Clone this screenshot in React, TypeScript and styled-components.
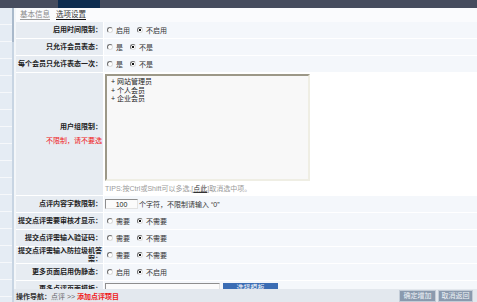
import React from "react";
import styled, { createGlobalStyle } from "styled-components";

const GlobalStyle = createGlobalStyle`
  html, body {
    margin: 0;
    padding: 0;
    width: 477px;
    height: 302px;
    overflow: hidden;
    background: #ffffff;
  }
  body {
    font-family: "Liberation Sans", "Noto Sans CJK SC", sans-serif;
    font-size: 7px;
    color: #333;
  }
`;

const Page = styled.div`
  position: relative;
  width: 477px;
  height: 302px;
  display: flex;
  flex-direction: column;
  overflow: hidden;
`;

// barre du haut (menu sombre)
const TopBar = styled.div`
  height: 8px;
  flex-shrink: 0;
  display: flex;
  background: #464c5e;
`;

const TopGap = styled.div<{ $w: number }>`
  width: ${(p) => p.$w}px;
`;

const TopActive = styled.div`
  width: 42px;
  background: #0d2c50;
`;

const Body = styled.div`
  flex: 1;
  display: flex;
  min-height: 0;
`;

const Sidebar = styled.div`
  width: 12px;
  flex-shrink: 0;
  background: repeating-linear-gradient(to bottom, #e5ecf4 0 16px, #f6f8fb 16px 17px);
`;

const Divider = styled.div`
  width: 2px;
  flex-shrink: 0;
  background: linear-gradient(to bottom, #a9b9cb 0 34px, #c8d5e3 34px);
`;

const Gutter = styled.div`
  width: 2px;
  flex-shrink: 0;
  background: #f3f6f9;
`;

const Main = styled.div`
  flex: 1;
  display: flex;
  flex-direction: column;
  min-width: 0;
  overflow: hidden;
`;

const Tabs = styled.div`
  height: 14px;
  flex-shrink: 0;
  display: flex;
  align-items: flex-start;
  gap: 6px;
  padding-left: 4px;
  background: #fafbfd;
`;

const Tab = styled.span<{ $active?: boolean }>`
  font-size: 7.5px;
  line-height: 9px;
  margin-top: 2px;
  color: ${(p) => (p.$active ? "#333" : "#8a8a8a")};
  border-bottom: ${(p) => (p.$active ? "1.5px solid #111" : "1px solid #9a9a9a")};
`;

const Form = styled.div`
  display: flex;
  flex-direction: column;
`;

const Row = styled.div<{ $h?: number }>`
  display: grid;
  grid-template-columns: 88px 1fr;
  height: ${(p) => p.$h ?? 17}px;
  border-bottom: 1px solid #ffffff;
  box-sizing: border-box;
`;

const Label = styled.div`
  background: #e7ecf2;
  border-right: 1px solid #ffffff;
  display: flex;
  flex-direction: column;
  align-items: flex-end;
  justify-content: center;
  padding-right: 1px;
  font-weight: 700;
  color: #222;
  text-align: right;
  line-height: 8px;
`;

const Hint = styled.div`
  color: #f01818;
  font-weight: 400;
  margin-top: 6px;
`;

const Value = styled.div<{ $plain?: boolean }>`
  background: ${(p) => (p.$plain ? "#ffffff" : "#f4f7fb")};
  display: flex;
  align-items: center;
  padding-left: 3px;
  min-width: 0;
`;

const ValueStack = styled.div`
  background: #ffffff;
  display: flex;
  flex-direction: column;
  padding: 0 0 0 1px;
`;

const Option = styled.label`
  display: inline-flex;
  align-items: center;
  margin-right: 7px;
  color: #333;
`;

const Radio = styled.span<{ $on?: boolean }>`
  display: inline-block;
  box-sizing: border-box;
  width: 6px;
  height: 6px;
  border-radius: 50%;
  border: 1px solid;
  border-color: #6f6f6f #dcdcdc #dcdcdc #6f6f6f;
  background: ${(p) =>
    p.$on ? "radial-gradient(circle, #111 0 1.1px, #ffffff 1.4px)" : "#ffffff"};
  margin-right: 3px;
`;

const ListBox = styled.div`
  width: 205px;
  height: 107px;
  box-sizing: border-box;
  margin-top: 1px;
  border: 2px solid;
  border-color: #9c9888 #efeee4 #efeee4 #9c9888;
  background: #f8f8f8;
  padding: 2px 0 0 4px;
  line-height: 8.5px;
  color: #222;
`;

const Tips = styled.div`
  margin-top: 4px;
  color: #9a9a9a;
  line-height: 8px;
  b {
    color: #333;
    font-weight: 400;
    text-decoration: underline;
  }
`;

const NumInput = styled.input`
  width: 33px;
  height: 10px;
  box-sizing: border-box;
  border: 1px solid;
  border-color: #8e8e8e #e2e2e2 #e2e2e2 #8e8e8e;
  background: #fbfbfb;
  font: inherit;
  font-size: 7px;
  text-align: center;
  padding: 0;
  margin: 0 1px 0 -2px;
  color: #222;
`;

const TextInput = styled.div`
  width: 115px;
  height: 10px;
  box-sizing: border-box;
  border: 1px solid;
  border-color: #8e8e8e #e2e2e2 #e2e2e2 #8e8e8e;
  background: #fbfbfb;
  margin-left: -2px;
  align-self: flex-start;
  margin-top: 2px;
`;

const BlueButton = styled.span`
  width: 55px;
  height: 10px;
  margin-left: 3px;
  align-self: flex-start;
  margin-top: 2px;
  background: #3b6db4;
  color: #ffffff;
  text-align: center;
  line-height: 10px;
`;

const Footer = styled.div`
  position: absolute;
  left: 14px;
  right: 0;
  bottom: 0;
  height: 13px;
  background: #e3e8ee;
  display: flex;
  align-items: center;
  justify-content: space-between;
  padding-left: 2px;
`;

const Crumbs = styled.div`
  color: #666;
  b {
    color: #333;
  }
  em {
    font-style: normal;
    color: #f01818;
    font-weight: 700;
  }
`;

const Buttons = styled.div`
  display: flex;
  gap: 2px;
  margin-right: 4px;
  align-self: flex-end;
`;

const GreyButton = styled.span<{ $w: number }>`
  width: ${(p) => p.$w}px;
  height: 12px;
  box-sizing: border-box;
  background: #8a9aae;
  border: 1px solid #c3ccd7;
  color: #eef2f7;
  text-align: center;
  line-height: 10px;
`;

type RadioRow = { label: string; on: string; off: string };

const radioRows: RadioRow[] = [
  { label: "启用时间限制：", on: "启用", off: "不启用" },
  { label: "只允许会员表态：", on: "是", off: "不是" },
  { label: "每个会员只允许表态一次：", on: "是", off: "不是" },
];

const checkRows: RadioRow[] = [
  { label: "提交点评需要审核才显示：", on: "需要", off: "不需要" },
  { label: "提交点评需输入验证码：", on: "需要", off: "不需要" },
  { label: "提交点评需输入防拉圾机答案：", on: "需要", off: "不需要" },
  { label: "更多页面启用伪静态：", on: "启用", off: "不启用" },
];

const groups = ["网站管理员", "个人会员", "企业会员"];

const Choice = ({ on, off }: { on: string; off: string }) => (
  <>
    <Option>
      <Radio />
      {on}
    </Option>
    <Option>
      <Radio $on />
      {off}
    </Option>
  </>
);

const App = () => {
  return (
    <Page>
      <GlobalStyle />
      <TopBar>
        <TopGap $w={58} />
        <TopActive />
      </TopBar>
      <Body>
        <Sidebar />
        <Divider />
        <Gutter />
        <Main>
          <Tabs>
            <Tab>基本信息</Tab>
            <Tab $active>选项设置</Tab>
          </Tabs>
          <Form>
            {radioRows.map((r) => (
              <Row key={r.label}>
                <Label>{r.label}</Label>
                <Value>
                  <Choice on={r.on} off={r.off} />
                </Value>
              </Row>
            ))}
            <Row $h={123}>
              <Label>
                用户组限制：
                <Hint>不限制，请不要选</Hint>
              </Label>
              <ValueStack>
                <ListBox>
                  {groups.map((g) => (
                    <div key={g}>+ {g}</div>
                  ))}
                </ListBox>
                <Tips>
                  TIPS:按Ctrl或Shift可以多选,[<b>点此</b>]取消选中项。
                </Tips>
              </ValueStack>
            </Row>
            <Row>
              <Label>点评内容字数限制：</Label>
              <Value>
                <NumInput readOnly value="100" />
                个字符，不限制请输入 “0”
              </Value>
            </Row>
            {checkRows.map((r) => (
              <Row key={r.label}>
                <Label>{r.label}</Label>
                <Value>
                  <Choice on={r.on} off={r.off} />
                </Value>
              </Row>
            ))}
            <Row>
              <Label>更多点评页面模板：</Label>
              <Value>
                <TextInput />
                <BlueButton>选择模板</BlueButton>
              </Value>
            </Row>
          </Form>
        </Main>
      </Body>
      <Footer>
        <Crumbs>
          <b>操作导航：</b>点评 &gt;&gt; <em>添加点评项目</em>
        </Crumbs>
        <Buttons>
          <GreyButton $w={37}>确定增加</GreyButton>
          <GreyButton $w={35}>取消返回</GreyButton>
        </Buttons>
      </Footer>
    </Page>
  );
};

export default App;
